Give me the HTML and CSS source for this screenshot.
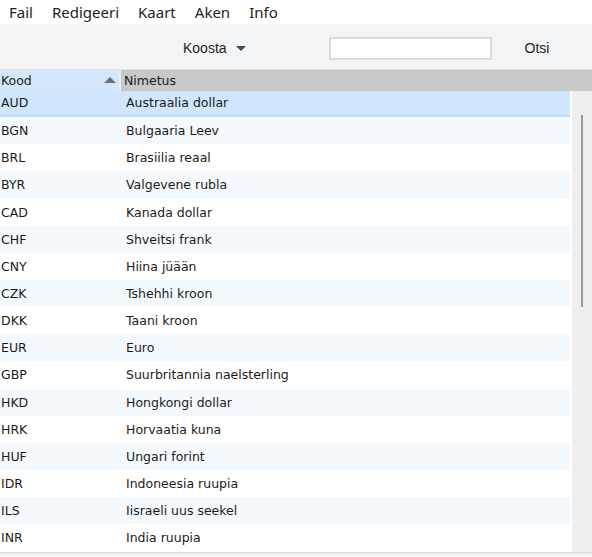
FILE: index.html
```html
<!DOCTYPE html>
<html lang="et">
<head>
    <meta charset="UTF-8">
    <meta name="viewport" content="width=device-width, initial-scale=1.0">
    <title>Valuutad</title>
    <link rel="stylesheet" href="styles.css">
</head>
<body>
    <ul class="menubar">
        <li>Fail</li>
        <li>Redigeeri</li>
        <li>Kaart</li>
        <li>Aken</li>
        <li>Info</li>
    </ul>
    <div class="toolbar">
        <span class="compose">Koosta <i class="caret"></i></span>
        <input type="text" class="search">
        <span class="search-btn">Otsi</span>
    </div>
    <div class="grid-head">
        <div class="col-code sorted">Kood<i class="sort-up"></i></div>
        <div class="col-name">Nimetus</div>
    </div>
    <div class="grid-wrap">
        <div class="grid-body">
            <div class="row selected"><span class="col-code">AUD</span><span class="col-name">Austraalia dollar</span></div>
            <div class="row"><span class="col-code">BGN</span><span class="col-name">Bulgaaria Leev</span></div>
            <div class="row"><span class="col-code">BRL</span><span class="col-name">Brasiilia reaal</span></div>
            <div class="row"><span class="col-code">BYR</span><span class="col-name">Valgevene rubla</span></div>
            <div class="row"><span class="col-code">CAD</span><span class="col-name">Kanada dollar</span></div>
            <div class="row"><span class="col-code">CHF</span><span class="col-name">Shveitsi frank</span></div>
            <div class="row"><span class="col-code">CNY</span><span class="col-name">Hiina jüään</span></div>
            <div class="row"><span class="col-code">CZK</span><span class="col-name">Tshehhi kroon</span></div>
            <div class="row"><span class="col-code">DKK</span><span class="col-name">Taani kroon</span></div>
            <div class="row"><span class="col-code">EUR</span><span class="col-name">Euro</span></div>
            <div class="row"><span class="col-code">GBP</span><span class="col-name">Suurbritannia naelsterling</span></div>
            <div class="row"><span class="col-code">HKD</span><span class="col-name">Hongkongi dollar</span></div>
            <div class="row"><span class="col-code">HRK</span><span class="col-name">Horvaatia kuna</span></div>
            <div class="row"><span class="col-code">HUF</span><span class="col-name">Ungari forint</span></div>
            <div class="row"><span class="col-code">IDR</span><span class="col-name">Indoneesia ruupia</span></div>
            <div class="row"><span class="col-code">ILS</span><span class="col-name">Iisraeli uus seekel</span></div>
            <div class="row"><span class="col-code">INR</span><span class="col-name">India ruupia</span></div>
        </div>
        <div class="scrollbar"><div class="thumb"></div></div>
    </div>
    <div class="statusline"></div>
</body>
</html>
```

FILE: styles.css
```css
html,body{
    margin:0;
    padding:0;
    background:#fff;
    color:#1b1b1b;
    overflow:hidden;
}
body{
    width:592px;
    height:557px;
    font-family:"DejaVu Sans",Verdana,sans-serif;
    font-size:12.5px;
}
/* menu */
.menubar{
    display:flex;
    margin:0;
    padding:0 0 0 9px;
    height:24px;
    align-items:center;
    list-style:none;
    font-family:"Noto Sans",sans-serif;
    font-size:15px;
    color:#222;
}
.menubar li{margin-right:19px}
/* toolbar */
.toolbar{
    display:flex;
    align-items:center;
    height:42px;
    padding-top:3px;
    background:#f3f4f6;
    border-bottom:1px solid #e2e2e2;
    font-family:"Liberation Sans",Arial,sans-serif;
    font-size:14px;
}
.compose{
    margin-left:183px;
    display:flex;
    align-items:center;
    color:#222;
}
.caret{
    display:inline-block;
    margin-left:9px;
    width:0;
    height:0;
    border-left:5px solid transparent;
    border-right:5px solid transparent;
    border-top:5px solid #3c4a5a;
}
.search{
    margin-left:83px;
    width:159px;
    height:19px;
    padding:0;
    border:2px solid #dcdcdc;
    background:#fff;
}
.search-btn{
    margin-left:33px;
    color:#222;
}
/* table head */
.grid-head{
    display:flex;
    height:21px;
    background:#c8c8c8;
    line-height:21px;
}
.grid-head .col-code{
    position:relative;
    width:121px;
    padding-left:1px;
    box-sizing:border-box;
    background:#d2e7fa;
    border-right:2px solid #e4eef8;
}
.sort-up{
    position:absolute;
    left:104px;
    top:7px;
    width:0;
    height:0;
    border-left:6px solid transparent;
    border-right:6px solid transparent;
    border-bottom:6px solid #707070;
}
.grid-head .col-name{padding-left:3px}
/* table body */
.grid-wrap{
    display:flex;
    height:461px;
    border-bottom:1px solid #d4d4d4;
}
.grid-body{
    width:570px;
    margin-right:2px;
}
.row{
    display:flex;
    height:27.15px;
    line-height:27px;
}
.row:nth-child(even){background:#f4f9fe}
.row.selected{
    background:#cfe6fc;
    height:24.15px;
    line-height:24px;
    border-bottom:2px solid #bcdcf7;
}
.row .col-code{
    width:126px;
    padding-left:1px;
    box-sizing:border-box;
}
.scrollbar{
    flex:1;
    position:relative;
    background:#efefef;
}
.thumb{
    position:absolute;
    left:9px;
    top:24px;
    width:2px;
    height:192px;
    background:#9a9a9a;
}
.statusline{
    height:3px;
    background:#f0f0f0;
}
```
